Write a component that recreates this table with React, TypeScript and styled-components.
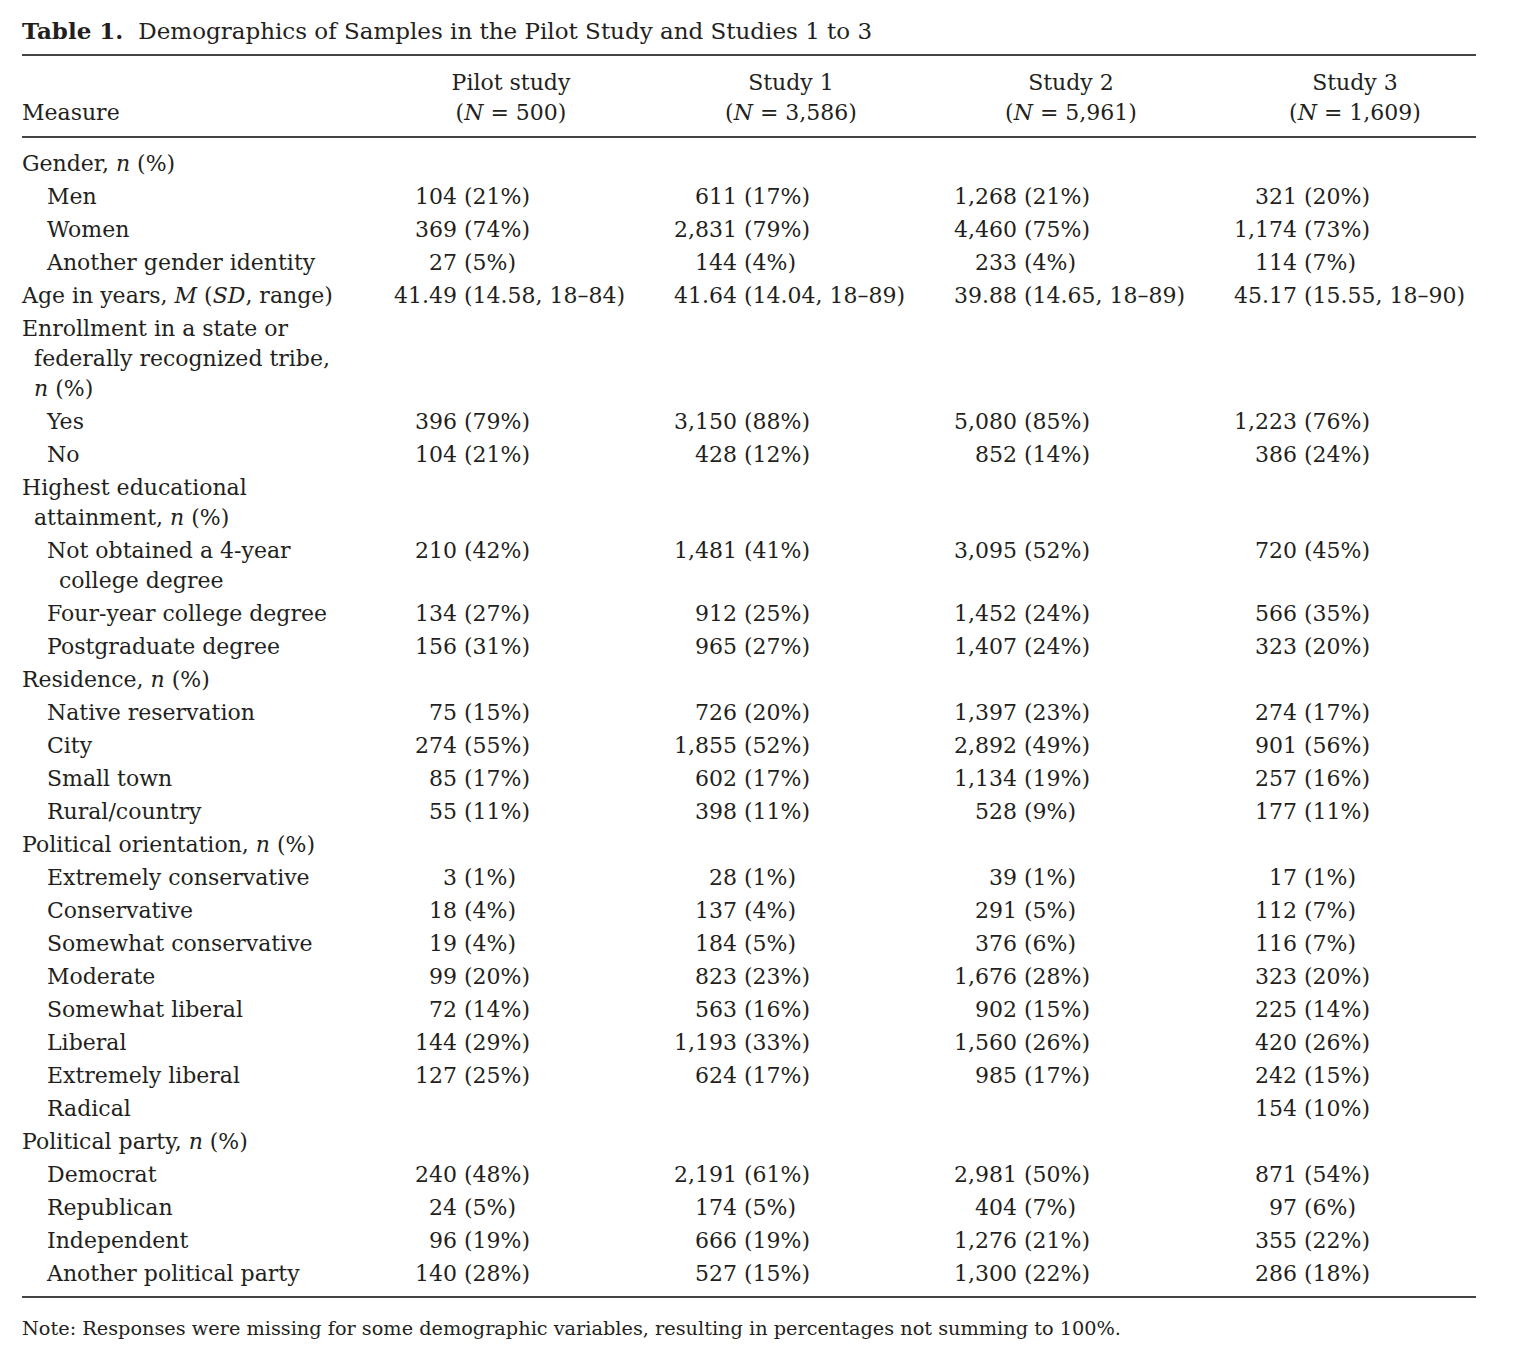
import React from 'react'
import styled, { createGlobalStyle } from 'styled-components'

const GlobalStyle = createGlobalStyle`
  html, body {
    margin: 0;
    padding: 0;
    background: #ffffff;
  }
  body {
    font-family: 'DejaVu Serif', 'Liberation Serif', serif;
    color: #231f20;
  }
`

const Page = styled.div`
  padding: 16px 22px 20px 22px;
  font-size: 22px;
  line-height: 30px;
`

const Caption = styled.div`
  margin-bottom: 8px;
  font-size: 23px;
  white-space: nowrap;
`

const CaptionLabel = styled.span`
  font-weight: bold;
  margin-right: 15px;
`

const Rule = styled.div`
  width: 1454px;
  height: 2px;
  background: #444444;
`

const Row = styled.div<{ $head?: boolean }>`
  display: grid;
  grid-template-columns: 349px repeat(4, 280px);
  padding: ${({ $head }) => ($head ? '12px 0 8px 0' : '1.5px 0')};
`

const Body = styled.div`
  padding: 9px 0 5.5px 0;
`

const HeadLabel = styled.div`
  align-self: end;
`

const HeadCell = styled.div<{ $shift?: number }>`
  text-align: center;
  white-space: nowrap;
  padding-left: ${({ $shift }) => $shift ?? 0}px;
`

const Label = styled.div<{ $level: number }>`
  padding-left: ${({ $level }) => $level * 25 + 12}px;
  text-indent: -12px;
  white-space: nowrap;
`

const Cell = styled.div`
  display: grid;
  grid-template-columns: 86px auto;
  align-content: start;
  white-space: nowrap;
`

const Num = styled.span`
  text-align: right;
`

const Rest = styled.span`
  padding-left: 7px;
`

const Note = styled.div`
  margin-top: 16px;
  font-size: 19.3px;
  white-space: nowrap;
`

type Entry = {
  label: React.ReactNode
  level: number
  data?: (string | null)[]
}

const pct = <i>n</i>

const rows: Entry[] = [
  { label: <>Gender, {pct} (%)</>, level: 0 },
  { label: 'Men', level: 1, data: ['104 (21%)', '611 (17%)', '1,268 (21%)', '321 (20%)'] },
  { label: 'Women', level: 1, data: ['369 (74%)', '2,831 (79%)', '4,460 (75%)', '1,174 (73%)'] },
  { label: 'Another gender identity', level: 1, data: ['27 (5%)', '144 (4%)', '233 (4%)', '114 (7%)'] },
  {
    label: <>Age in years, <i>M</i> (<i>SD</i>, range)</>,
    level: 0,
    data: ['41.49 (14.58, 18–84)', '41.64 (14.04, 18–89)', '39.88 (14.65, 18–89)', '45.17 (15.55, 18–90)']
  },
  { label: <>Enrollment in a state or<br />federally recognized tribe,<br />{pct} (%)</>, level: 0 },
  { label: 'Yes', level: 1, data: ['396 (79%)', '3,150 (88%)', '5,080 (85%)', '1,223 (76%)'] },
  { label: 'No', level: 1, data: ['104 (21%)', '428 (12%)', '852 (14%)', '386 (24%)'] },
  { label: <>Highest educational<br />attainment, {pct} (%)</>, level: 0 },
  {
    label: <>Not obtained a 4-year<br />college degree</>,
    level: 1,
    data: ['210 (42%)', '1,481 (41%)', '3,095 (52%)', '720 (45%)']
  },
  { label: 'Four-year college degree', level: 1, data: ['134 (27%)', '912 (25%)', '1,452 (24%)', '566 (35%)'] },
  { label: 'Postgraduate degree', level: 1, data: ['156 (31%)', '965 (27%)', '1,407 (24%)', '323 (20%)'] },
  { label: <>Residence, {pct} (%)</>, level: 0 },
  { label: 'Native reservation', level: 1, data: ['75 (15%)', '726 (20%)', '1,397 (23%)', '274 (17%)'] },
  { label: 'City', level: 1, data: ['274 (55%)', '1,855 (52%)', '2,892 (49%)', '901 (56%)'] },
  { label: 'Small town', level: 1, data: ['85 (17%)', '602 (17%)', '1,134 (19%)', '257 (16%)'] },
  { label: 'Rural/country', level: 1, data: ['55 (11%)', '398 (11%)', '528 (9%)', '177 (11%)'] },
  { label: <>Political orientation, {pct} (%)</>, level: 0 },
  { label: 'Extremely conservative', level: 1, data: ['3 (1%)', '28 (1%)', '39 (1%)', '17 (1%)'] },
  { label: 'Conservative', level: 1, data: ['18 (4%)', '137 (4%)', '291 (5%)', '112 (7%)'] },
  { label: 'Somewhat conservative', level: 1, data: ['19 (4%)', '184 (5%)', '376 (6%)', '116 (7%)'] },
  { label: 'Moderate', level: 1, data: ['99 (20%)', '823 (23%)', '1,676 (28%)', '323 (20%)'] },
  { label: 'Somewhat liberal', level: 1, data: ['72 (14%)', '563 (16%)', '902 (15%)', '225 (14%)'] },
  { label: 'Liberal', level: 1, data: ['144 (29%)', '1,193 (33%)', '1,560 (26%)', '420 (26%)'] },
  { label: 'Extremely liberal', level: 1, data: ['127 (25%)', '624 (17%)', '985 (17%)', '242 (15%)'] },
  { label: 'Radical', level: 1, data: [null, null, null, '154 (10%)'] },
  { label: <>Political party, {pct} (%)</>, level: 0 },
  { label: 'Democrat', level: 1, data: ['240 (48%)', '2,191 (61%)', '2,981 (50%)', '871 (54%)'] },
  { label: 'Republican', level: 1, data: ['24 (5%)', '174 (5%)', '404 (7%)', '97 (6%)'] },
  { label: 'Independent', level: 1, data: ['96 (19%)', '666 (19%)', '1,276 (21%)', '355 (22%)'] },
  { label: 'Another political party', level: 1, data: ['140 (28%)', '527 (15%)', '1,300 (22%)', '286 (18%)'] }
]

const studies = [
  { name: 'Pilot study', n: '500', shift: 0 },
  { name: 'Study 1', n: '3,586', shift: 0 },
  { name: 'Study 2', n: '5,961', shift: 0 },
  { name: 'Study 3', n: '1,609', shift: 8 }
]

function Value({ text }: { text: string | null }) {
  if (!text) return <Cell />
  const i = text.indexOf(' ')
  return (
    <Cell>
      <Num>{text.slice(0, i)}</Num>
      <Rest>{text.slice(i + 1)}</Rest>
    </Cell>
  )
}

export default function App() {
  return (
    <>
      <GlobalStyle />
      <Page>
        <Caption>
          <CaptionLabel>Table 1.</CaptionLabel>
          Demographics of Samples in the Pilot Study and Studies 1 to 3
        </Caption>
        <Rule />
        <Row $head>
          <HeadLabel>Measure</HeadLabel>
          {studies.map((s) => (
            <HeadCell key={s.name} $shift={s.shift}>
              {s.name}
              <br />(<i>N</i> = {s.n})
            </HeadCell>
          ))}
        </Row>
        <Rule />
        <Body>
          {rows.map((r, idx) => (
            <Row key={idx}>
              <Label $level={r.level}>{r.label}</Label>
              {(r.data ?? [null, null, null, null]).map((d, j) => (
                <Value key={j} text={d} />
              ))}
            </Row>
          ))}
        </Body>
        <Rule />
        <Note>
          Note: Responses were missing for some demographic variables, resulting in percentages not summing to 100%.
        </Note>
      </Page>
    </>
  )
}
